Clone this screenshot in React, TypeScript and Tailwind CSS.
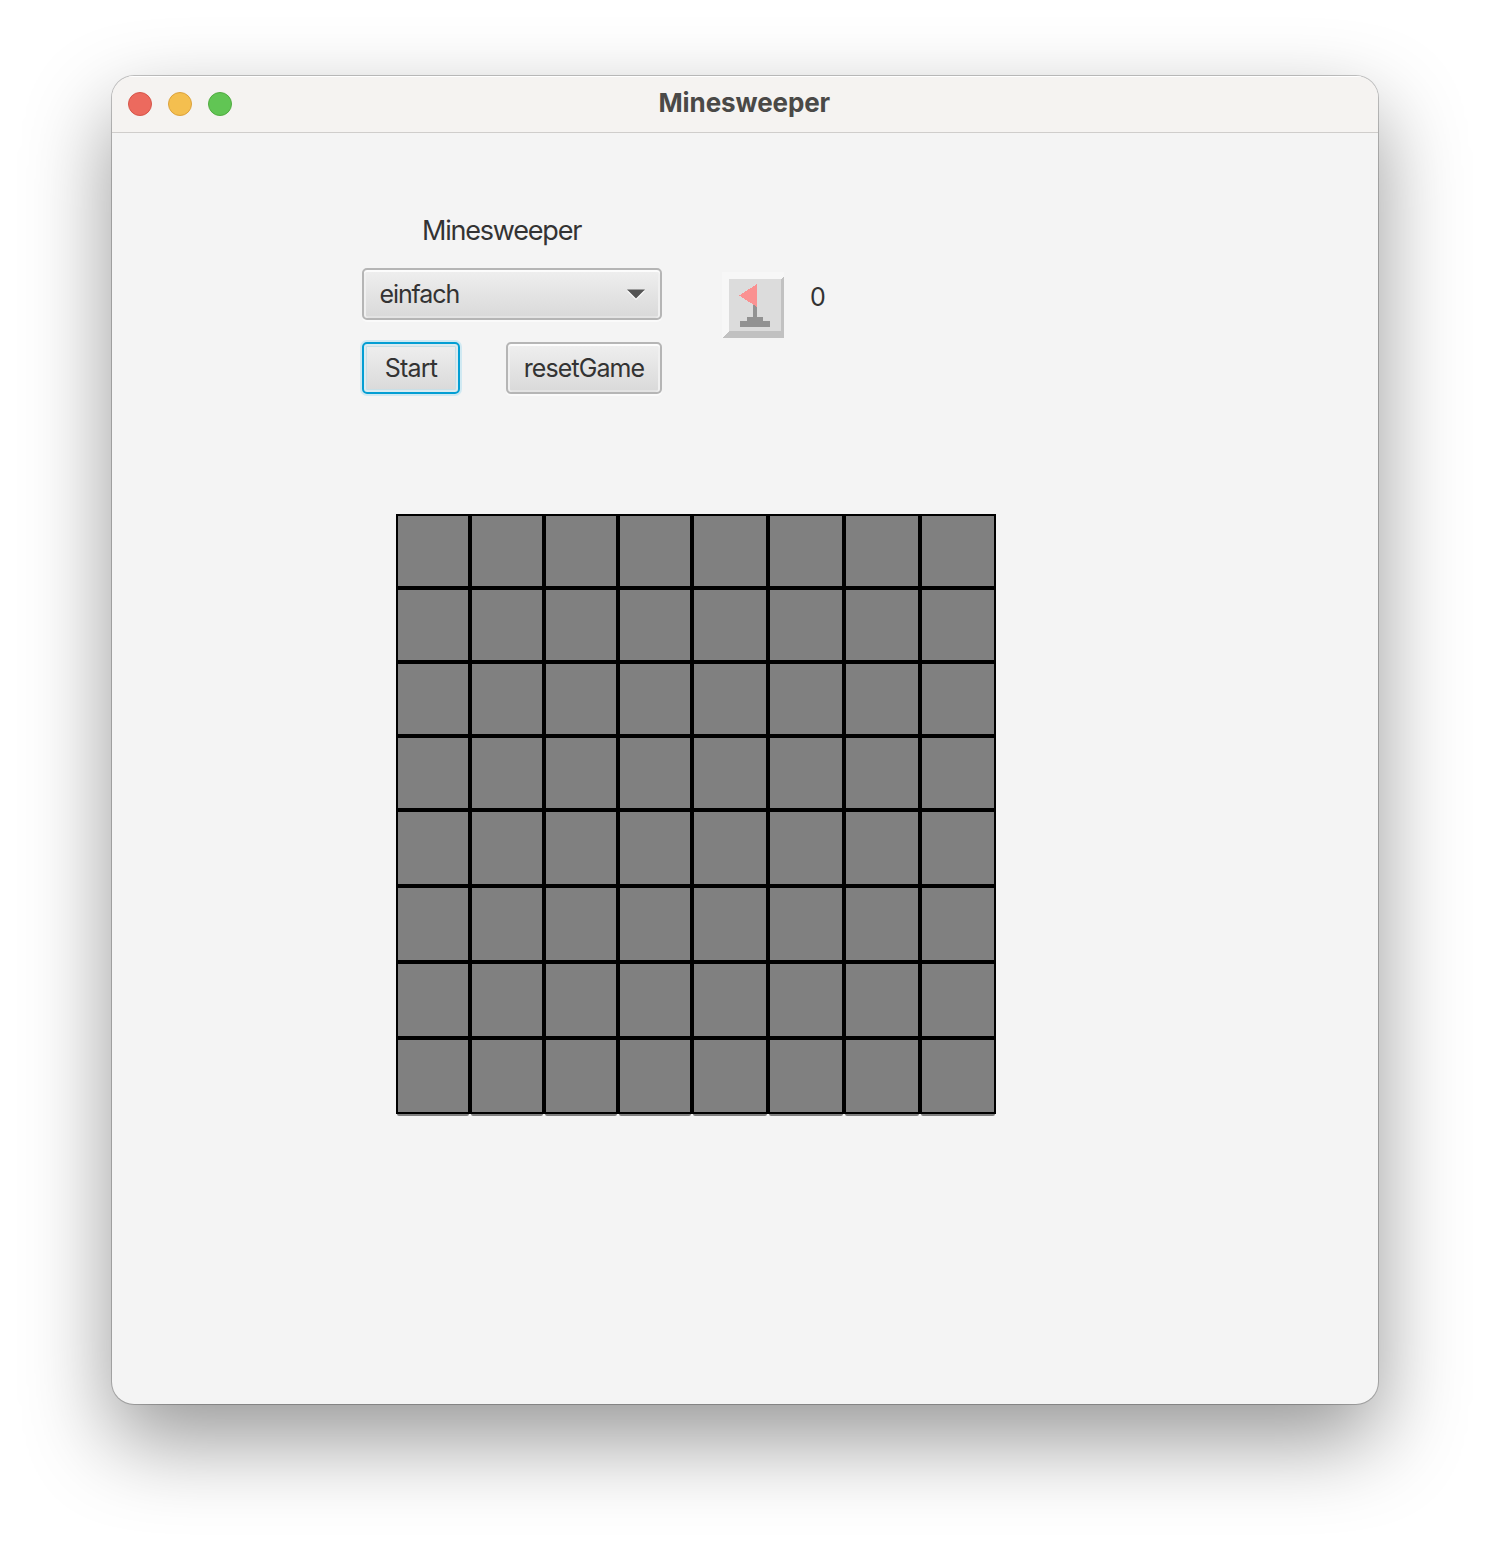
import React from "react";

const fx =
  "rounded-[5px] border-2 border-[#b5b5b5] bg-gradient-to-b from-[#efefef] to-[#d9d9d9] shadow-[0_2px_0_#fafafa,inset_0_2px_0_#fcfcfc,inset_2px_0_0_#f0f0f0,inset_-2px_0_0_#f0f0f0,inset_0_-2px_0_#e3e3e3]";

function FlagIcon() {
  return (
    <svg width="62" height="66" viewBox="0 0 62 66" shapeRendering="crispEdges">
      <rect width="62" height="66" fill="#f7f7f7" />
      <path d="M62 4V66H0L7 59H59V7Z" fill="#c1c1c1" />
      <rect x="7" y="7" width="52" height="52" fill="#dcdcdc" />
      <path d="M31 32h4v13h6v4h7v6H18v-6h7v-4h6z" fill="#929292" />
      <path d="M35 12v23L17 23.500Z" fill="#fa9191" />
    </svg>
  );
}

function Board() {
  return (
    <div className="ml-[284px] mt-[120px] grid w-[600px] grid-cols-[74px_74px_74px_74px_76px_76px_76px_76px] grid-rows-[74px_74px_74px_74px_76px_76px_76px_76px]">
      {Array.from({ length: 64 }, (_, i) => (
        <div
          key={i}
          className={
            i >= 56
              ? "relative border-2 border-black bg-[#808080] after:absolute after:-bottom-1 after:-left-px after:-right-px after:h-[2px] after:rounded-b-[4px] after:bg-[#808080]"
              : "border-2 border-black bg-[#808080]"
          }
        />
      ))}
    </div>
  );
}

export default function App() {
  return (
    <div className="h-[1552px] w-[1490px] overflow-hidden bg-white pl-[112px] pt-[76px] font-['Inter',sans-serif] text-[#333]">
      <div className="h-[1328px] w-[1266px] overflow-hidden rounded-[22px] bg-[#f4f4f4] shadow-[0_0_0_1px_rgba(0,0,0,0.2),0_0_2px_rgba(0,0,0,0.1),0_36px_86px_rgba(0,0,0,0.41)]">
        <header className="flex h-[57px] items-center border-b border-[#cfcdcb] bg-[#f5f3f1] pl-4 shadow-[inset_0_1px_0_#fff]">
          <div className="flex w-[530px] gap-4">
            <i className="size-6 rounded-full border border-[#d65549] bg-[#ec6a5e]" />
            <i className="size-6 rounded-full border border-[#dca23c] bg-[#f4bf4f]" />
            <i className="size-6 rounded-full border border-[#51ab41] bg-[#61c554]" />
          </div>
          <h1 className="-mt-[2px] ml-[0.5px] text-[26px] font-bold leading-8 tracking-[-0.1px] text-[#4a4947]">Minesweeper</h1>
        </header>

        <main>
          <div className="ml-[310px] mt-[80px] h-9 text-[27px] leading-9 tracking-[-1.2px]">Minesweeper</div>
          <div className="ml-[250px] mt-[19px] flex h-[126px]">
            <div className="w-[300px]">
              <div className={`flex h-[52px] items-center justify-between pl-[15.5px] pr-[15px] ${fx}`}>
                <span className="text-[25px] leading-8 tracking-[-1.1px]">einfach</span>
                <svg width="18" height="12" viewBox="0 0 18 12">
                  <path d="M0 3H18L9 12Z" fill="#fff" />
                  <path d="M0 1.500H18L9 10.500Z" fill="#555" />
                </svg>
              </div>
              <div className="mt-[22px] flex justify-between">
                <button className="h-[52px] w-[98px] rounded-[5px] border-2 border-[#039ed3] bg-gradient-to-b from-[#efefef] to-[#d9d9d9] text-[25px] leading-8 tracking-[-0.8px] shadow-[0_0_0_2px_#d0e9f2,inset_0_0_0_2px_#dcebf0,inset_0_0_0_3px_#c9dfe6]">
                  Start
                </button>
                <button className={`h-[52px] w-[156px] whitespace-nowrap text-[25px] leading-8 tracking-[-0.9px] ${fx}`}>
                  resetGame
                </button>
              </div>
            </div>
            <div className="ml-[60px] mt-[4px]">
              <FlagIcon />
            </div>
            <span className="ml-[26px] mt-[13px] text-[25px] leading-8">0</span>
          </div>
          <Board />
        </main>
      </div>
    </div>
  );
}
